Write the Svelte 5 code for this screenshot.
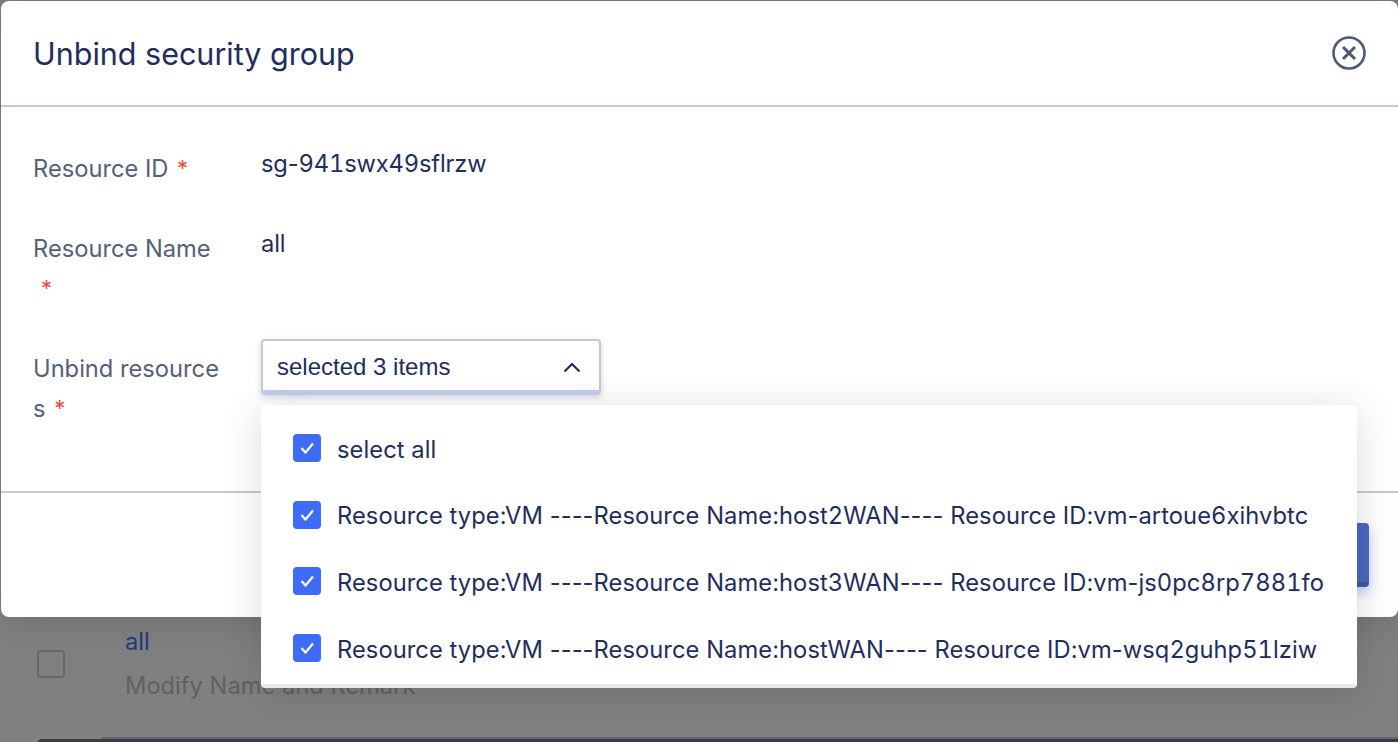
<script>
  const items = [
    'select all',
    'Resource type:VM ----Resource Name:host2WAN---- Resource ID:vm-artoue6xihvbtc',
    'Resource type:VM ----Resource Name:host3WAN---- Resource ID:vm-js0pc8rp7881fo',
    'Resource type:VM ----Resource Name:hostWAN---- Resource ID:vm-wsq2guhp51lziw'
  ];
  const parts = (s) => s.split(/(\d+)/);
</script>

<div class="page">
  <div class="behind">
    <span class="row-check"></span>
    <div class="row-text">
      <div class="row-name">all</div>
      <div class="row-remark">Modify Name and Remark</div>
    </div>
  </div>
  <div class="scrollbar"><div class="thumb"></div><div class="track"></div></div>

  <section class="modal">
    <header class="head">
      <h2>Unbind security group</h2>
      <svg class="close" viewBox="0 0 34 34" width="34" height="34" fill="none" stroke="#4d5a75">
        <circle cx="17" cy="17" r="15.5" stroke-width="2.6" />
        <path d="M11 11 23 23M23 11 11 23" stroke-width="3" />
      </svg>
    </header>
    <div class="body">
      <div class="field f1">
        <div class="label">Resource ID <i>*</i></div>
        <div class="value">{#each parts('sg-941swx49sflrzw') as p, n}{#if n % 2}<span class="num">{p}</span>{:else}{p}{/if}{/each}</div>
      </div>
      <div class="field f2">
        <div class="label">Resource Name <i>*</i></div>
        <div class="value">all</div>
      </div>
      <div class="field f3">
        <div class="label">Unbind resources <i>*</i></div>
        <div class="select">
          <span>selected 3 items</span>
          <svg viewBox="0 0 18 12" width="18" height="12" fill="none" stroke="#1f2e5c" stroke-width="2.2"><path d="M1.5 10.5 9 3l7.5 7.5" /></svg>
        </div>
      </div>
    </div>
    <footer class="foot"><div class="primary"></div></footer>
  </section>

  <ul class="menu">
    {#each items as item}
      <li>
        <span class="box">
          <svg viewBox="0 0 15 12" width="15" height="12" fill="none" stroke="#fff" stroke-width="2.2"><path d="M1.5 6 5.5 10.5 13 1.5" /></svg>
        </span>
        <span class="text">{#each parts(item) as p, n}{#if n % 2}<span class="num">{p}</span>{:else}{p}{/if}{/each}</span>
      </li>
    {/each}
  </ul>
</div>

<style>
  :global(body) { margin: 0; }
  .page {
    position: relative;
    width: 1398px;
    height: 742px;
    overflow: hidden;
    background: #808080;
    font-family: Inter, "Liberation Sans", sans-serif;
    color: #1f2e5c;
  }
  .num { font-variant-numeric: tabular-nums; }
  .behind {
    display: flex;
    align-items: center;
    gap: 60px;
    padding: 627px 0 0 37px;
  }
  .row-check {
    width: 24px;
    height: 24px;
    border: 2px solid #636873;
    border-radius: 4px;
  }
  .row-name { font-size: 23.7px; line-height: 30px; color: #233a7d; }
  .row-remark { font-size: 23.7px; line-height: 30px; margin-top: 14px; color: #5f6167; }
  .scrollbar { margin: 36px 0 0 37px; }
  .thumb { margin-left: 64px; height: 2px; background: #636873; }
  .track { height: 6px; background: #3d3d3d; border-radius: 5px 0 0 0; }
  .modal {
    position: absolute;
    left: 1px;
    top: 1px;
    width: 1397px;
    height: 616px;
    background: #fff;
    border-radius: 8px;
    display: flex;
    flex-direction: column;
    box-shadow: 0 0 40px rgba(0, 0, 0, 0.18);
  }
  .head {
    height: 106px;
    flex: none;
    box-sizing: border-box;
    padding: 0 32px;
    display: flex;
    align-items: center;
    justify-content: space-between;
    border-bottom: 2px solid #c4c9d9;
  }
  h2 { margin: 0; font-size: 30.5px; font-weight: 400; color: #1f2e5c; }
  .body {
    flex: 1;
    box-sizing: border-box;
    padding: 0 32px;
    border-bottom: 2px solid #c4c9d9;
  }
  .field { display: flex; }
  .f1 { padding-top: 42px; height: 78px; box-sizing: border-box; }
  .f2 { padding-top: 44px; height: 112px; box-sizing: border-box; }
  .f3 { padding-top: 42px; }
  .label {
    width: 196px;
    margin-right: 32px;
    font-size: 23.7px;
    line-height: 40px;
    color: #566178;
    word-break: break-all;
    flex: none;
  }
  .f3 .label { padding-top: 10px; }
  .label i {
    color: #f0483e;
    font-style: normal;
    font-size: 22px;
    margin-left: 2px;
    position: relative;
    top: -1px;
  }
  .f2 .label i { margin-left: 8px; }
  .value { font-size: 23.7px; letter-spacing: -0.15px; line-height: 30px; color: #1f2e5c; }
  .select {
    width: 340px;
    height: 56px;
    box-sizing: border-box;
    padding: 2px 18px 0 14px;
    display: flex;
    align-items: center;
    justify-content: space-between;
    border: 2px solid #c4c9d9;
    border-bottom: 5px solid #c2cdea;
    border-radius: 4px;
    font-family: "Liberation Sans", Arial, sans-serif;
    font-size: 24px;
    box-shadow: 0 2px 6px rgba(60, 70, 110, 0.22);
  }
  .foot {
    height: 124px;
    box-sizing: border-box;
    flex: none;
    padding: 30px 29px 0 0;
    display: flex;
    justify-content: flex-end;
    align-items: flex-start;
  }
  .primary {
    width: 180px;
    height: 64px;
    background: #4968bd;
    border-bottom: 5px solid #3e58a5;
    box-sizing: border-box;
    border-radius: 4px;
    box-shadow: 0 6px 12px rgba(73, 104, 220, 0.35);
  }
  .menu {
    position: absolute;
    left: 261px;
    top: 405px;
    width: 1096px;
    height: 283px;
    box-sizing: border-box;
    margin: 0;
    padding: 10px 0 0 32px;
    list-style: none;
    background: #fff;
    border-bottom: 4px solid #e8e8e8;
    border-radius: 4px;
    box-shadow: 0 4px 40px rgba(0, 0, 0, 0.14);
    font-size: 23.7px;
    letter-spacing: 0.07px;
    color: #1f2e5c;
  }
  .menu li {
    display: flex;
    align-items: center;
    gap: 16px;
    height: 66.6px;
    white-space: nowrap;
  }
  .text { padding-top: 2px; }
  .box {
    width: 28px;
    height: 28px;
    flex: none;
    background: #3e6bf7;
    border-radius: 4px;
    display: flex;
    align-items: center;
    justify-content: center;
  }
</style>
